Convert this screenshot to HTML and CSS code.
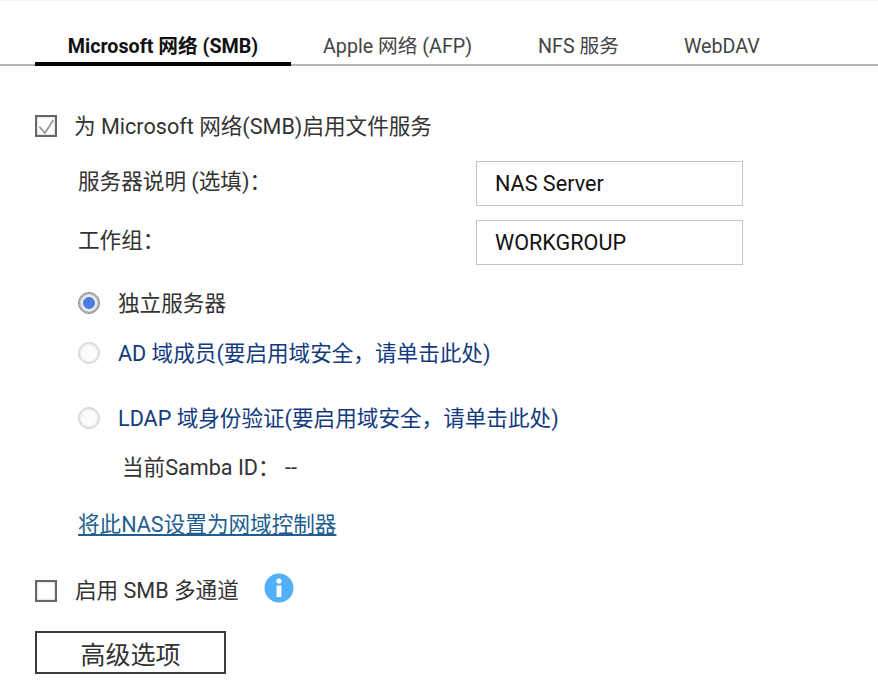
FILE: index.html
```html
<!DOCTYPE html>
<html lang="zh-CN">

<head>
  <meta charset="UTF-8">
  <title>Microsoft 网络 (SMB)</title>
  <link rel="stylesheet" href="styles.css">
</head>

<body>
  <div class="tabs">
    <a class="tab active">Microsoft 网络 (SMB)</a>
    <a class="tab tab-afp">Apple 网络 (AFP)</a>
    <a class="tab tab-nfs">NFS 服务</a>
    <a class="tab tab-webdav">WebDAV</a>
  </div>

  <div class="content">
    <div class="check-row enable-row">
      <span class="checkbox">
        <svg width="18" height="18" viewBox="0 0 18 18">
          <path d="M2.3 9.6 L8 16 L16.3 3" fill="none" stroke="#9a9a9a" stroke-width="1.8" />
        </svg>
      </span>
      为 Microsoft 网络(SMB)启用文件服务
    </div>

    <div class="field-row desc-row">
      <label class="field-label">服务器说明 (选填)：</label>
      <div class="text-input">NAS Server</div>
    </div>
    <div class="field-row group-row">
      <label class="field-label">工作组：</label>
      <div class="text-input">WORKGROUP</div>
    </div>

    <div class="radio-row standalone-row"><span class="radio checked"></span>独立服务器</div>
    <div class="radio-row ad-row"><span class="radio"></span><a class="domain-link">AD 域成员(要启用域安全，请单击此处)</a></div>
    <div class="radio-row ldap-row"><span class="radio"></span><a class="domain-link">LDAP 域身份验证(要启用域安全，请单击此处)</a></div>

    <div class="samba-id">当前Samba ID： --</div>
    <a class="controller-link">将此NAS设置为网域控制器</a>

    <div class="check-row multi-row">
      <span class="checkbox"></span>
      启用 SMB 多通道
      <svg class="info-icon" width="30" height="30" viewBox="0 0 30 30">
        <circle cx="15" cy="15" r="14.5" fill="#53aefc" />
        <circle cx="15" cy="8" r="2.6" fill="#fff" />
        <rect x="12.6" y="12.5" width="4.8" height="11.5" fill="#fff" />
      </svg>
    </div>

    <button class="advanced-btn">高级选项</button>
  </div>
</body>

</html>
```

FILE: styles.css
```css
* {
  margin: 0;
  padding: 0;
  box-sizing: border-box;
  font-family: Roboto, 'Noto Sans CJK SC', sans-serif;
}

html,
body {
  height: 100%;
  overflow: hidden;
}

body {
  background: #fff;
  color: #333;
  font-size: 21.6px;
  border-top: 1px solid #f1f5fc;
}

.tabs {
  display: flex;
  height: 65px;
  padding-left: 35px;
  border-bottom: 2px solid #b5b5b5;
}

.tab {
  height: 65px;
  line-height: 92px;
  font-size: 19.7px;
  color: #444;
  white-space: nowrap;
}

.tab.active {
  width: 256px;
  text-align: center;
  font-weight: 700;
  color: #111;
  border-bottom: 4px solid #000;
}

.tab-afp {
  margin-left: 32px;
}

.tab-nfs {
  margin-left: 66px;
}

.tab-webdav {
  margin-left: 65px;
}

.content {
  padding-left: 35px;
}

.check-row {
  display: flex;
  align-items: center;
  height: 24px;
}

.enable-row {
  margin-top: 46px;
}

.enable-row .checkbox {
  margin-top: 4px;
  margin-right: 17px;
}

.checkbox {
  width: 22px;
  height: 22px;
  margin-top: 6px;
  margin-right: 18px;
  border: 2px solid #666;
  background: #fff;
  box-shadow: inset 0 0 2px #aaa;
  flex: none;
}

.checkbox svg {
  display: block;
}

.field-row {
  display: flex;
  align-items: center;
  height: 45px;
  padding-left: 43px;
}

.desc-row {
  margin-top: 25px;
}

.group-row {
  margin-top: 14px;
}

.field-label {
  width: 398px;
  margin-bottom: 8px;
}

.text-input {
  width: 267px;
  height: 45px;
  line-height: 43px;
  padding-left: 18px;
  border: 1px solid #c4c4c4;
  color: #111;
}

.radio-row {
  display: flex;
  align-items: center;
  height: 24px;
  padding-left: 43px;
}

.standalone-row {
  margin-top: 24px;
}

.ad-row {
  margin-top: 26px;
}

.ldap-row {
  margin-top: 41px;
}

.radio {
  width: 22px;
  height: 22px;
  margin-top: 4px;
  margin-right: 18px;
  border: 1px solid #d0d0d0;
  border-radius: 50%;
  background: #fcfcfc;
  box-shadow: inset 0 0 3px #bbb;
  flex: none;
}

.radio.checked {
  border: 1px solid #8a8a8a;
  background: radial-gradient(circle, #4a7fe0 0 5.5px, #f4f4f4 6.5px);
  box-shadow: inset 0 0 2px 1px #8f8f8f;
}

.domain-link {
  color: #123a80;
}

.samba-id {
  margin-top: 28px;
  margin-left: 87px;
  line-height: 24px;
}

.controller-link {
  display: inline-block;
  margin-top: 33px;
  margin-left: 43px;
  line-height: 24px;
  color: #215d8f;
  text-decoration: underline;
}

.multi-row {
  margin-top: 39px;
}

.info-icon {
  margin-left: 25px;
}

.advanced-btn {
  display: block;
  width: 191px;
  height: 43px;
  margin-top: 31px;
  border: 2px solid #3c3c3c;
  background: #fff;
  color: #333;
  font-size: 25px;
}
```
